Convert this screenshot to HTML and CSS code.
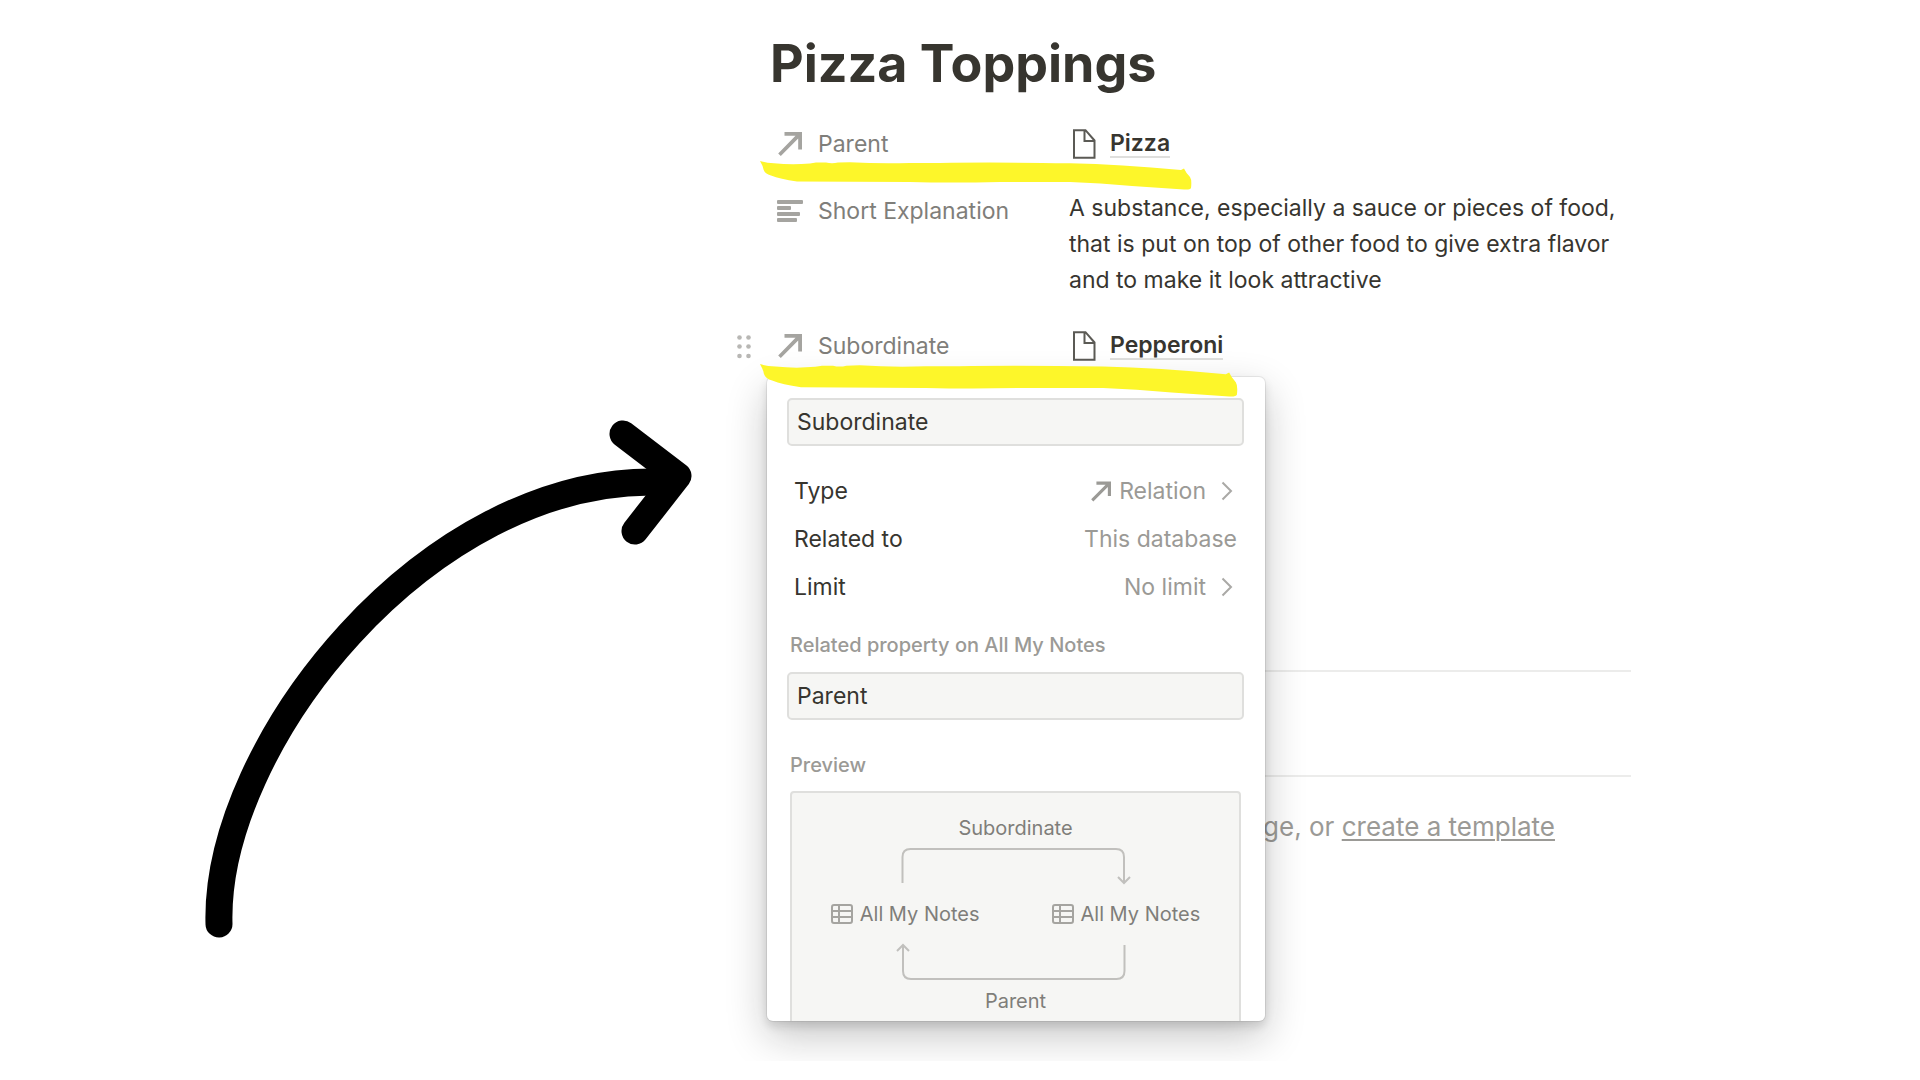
FILE: index.html
```
<!DOCTYPE html>
<html lang="en">
<head>
<meta charset="utf-8">
<meta name="viewport" content="width=device-width, initial-scale=1">
<title>Pizza Toppings</title>
<link rel="stylesheet" href="styles.css">
</head>
<body>
<svg class="defs" aria-hidden="true">
<symbol id="relation" viewBox="0 0 24 24"><path d="M6.500 0H24v17.500h-3.800V6.500L2.800 24 .2 21.400 17.500 3.800H6.500z"/></symbol>
<symbol id="page" viewBox="0 0 24 30"><path d="M2 1.200h11.500l9 10.300v17.200H2zM12.500 1.500V12h9.500" fill="none" stroke="currentColor" stroke-width="2"/></symbol>
<symbol id="chevron" viewBox="0 0 12 20"><path d="M1.500 1.500L10 10l-8.500 8.500" fill="none" stroke="currentColor" stroke-width="2"/></symbol>
<symbol id="table" viewBox="0 0 22 20"><path d="M3 1h16q2 0 2 2v14q0 2-2 2H3q-2 0-2-2V3q0-2 2-2zM1 7h20M1 13h20M8 1v18" fill="none" stroke="currentColor" stroke-width="2"/></symbol>
<symbol id="marker" viewBox="0 0 432 29" preserveAspectRatio="none"><path d="M0 0Q6 2 14 2.300Q32 4 50 2.500L56 1.500H66Q72 3 78 1.500L90 1.200Q120 3 150 2H180Q230 1 310 2.300Q360 3.500 421 9L424 7.500Q426 12 430 16Q432 19 431 27Q430 29 424 28.500L372 25Q340 22 310 21H240Q190 22 150 21L37 20.500Q20 18 11 14.500Q5 13 3.500 8.500Q3 5 0 0z"/></symbol>
</svg>
<div class="stage">
<aside class="side">
<svg class="swoosh" viewBox="0 0 487 519" aria-hidden="true">
<path d="M14 505C9 326 222 57 454 63"/>
<path d="M418 15l55 42-43 55"/>
</svg>
</aside>
<main class="page">
<h1 class="title">Pizza Toppings</h1>
<div class="props">
<div class="prop">
<div class="name"><svg class="icon rel"><use href="#relation"/></svg>Parent</div>
<div class="value"><svg class="icon doc"><use href="#page"/></svg><a href="#pizza" class="link">Pizza</a></div>
<svg class="mark" aria-hidden="true"><use href="#marker"/></svg>
</div>
<div class="prop">
<div class="name"><svg class="icon lines" viewBox="0 0 26 22"><rect width="26" height="4" rx="1"/><rect y="6" width="14" height="4" rx="1"/><rect y="12" width="23" height="4" rx="1"/><rect y="18" width="20" height="4" rx="1"/></svg>Short Explanation</div>
<p class="text">A substance, especially a sauce or pieces of food, that is put on top of other food to give extra flavor and to make it look attractive</p>
</div>
<div class="prop">
<button class="grip" aria-label="Move property"><svg viewBox="0 0 14 24"><circle cx="2.500" cy="2.500" r="2.300"/><circle cx="11.500" cy="2.500" r="2.300"/><circle cx="2.500" cy="11.500" r="2.300"/><circle cx="11.500" cy="11.500" r="2.300"/><circle cx="2.500" cy="21" r="2.300"/><circle cx="11.500" cy="21" r="2.300"/></svg></button>
<div class="name"><svg class="icon rel"><use href="#relation"/></svg>Subordinate</div>
<div class="value"><svg class="icon doc"><use href="#page"/></svg><a href="#pepperoni" class="link">Pepperoni</a></div>
<form class="menu">
<input class="field" type="text" value="Subordinate" aria-label="Property name">
<div class="options">
<button type="button" class="option"><span>Type</span><span class="choice"><svg class="small"><use href="#relation"/></svg>Relation<svg class="chev"><use href="#chevron"/></svg></span></button>
<div class="option"><span>Related to</span><span class="choice">This database</span></div>
<button type="button" class="option"><span>Limit</span><span class="choice">No limit<svg class="chev"><use href="#chevron"/></svg></span></button>
</div>
<label class="label" for="related">Related property on All My Notes</label>
<input class="field" type="text" id="related" value="Parent">
<div class="label preview">Preview</div>
<div class="diagram">
<div>Subordinate</div>
<svg class="wire" viewBox="0 0 240 38"><path d="M6.500 36V10q0-8 8-8H220q8 0 8 8v26M222 30l6 6 6-6"/></svg>
<div class="nodes">
<span class="node"><svg class="db"><use href="#table"/></svg>All My Notes</span>
<span class="node"><svg class="db"><use href="#table"/></svg>All My Notes</span>
</div>
<svg class="wire" viewBox="0 0 240 38"><path d="M228.500 2v26q0 8-8 8H15q-8 0-8-8V2M1 8l6-6 6 6"/></svg>
<div>Parent</div>
</div>
</form>
<svg class="mark wide" aria-hidden="true"><use href="#marker"/></svg>
</div>
</div>
<div class="comments"></div>
<p class="hint">page, or <a href="#template">create a template</a></p>
</main>
</div>
</body>
</html>
```
FILE: styles.css
```
*{box-sizing:border-box}
body{margin:0;background-color:#fff;color:#37352f;font-family:Inter,"Liberation Sans",sans-serif;font-size:23px;line-height:36px}
h1,p{margin:0}
svg{display:block;flex:none;fill:currentColor}
button,input{font:inherit;color:inherit}
.defs{position:absolute;width:0;height:0}
.stage{display:grid;grid-template-columns:3fr 5fr}
.side{display:flex;justify-content:flex-end;align-items:flex-start;padding:419px 28px 0 0}
.swoosh{width:487px;max-width:100%;fill:none;stroke:#000;stroke-width:27;stroke-linecap:round;stroke-linejoin:round}
.page{min-height:calc(100vh - 19px);max-width:1200px;padding:32px 289px 0 47px;overflow:hidden}
.title{margin-left:3px;font-size:52px;line-height:64px;font-weight:700}
.props{display:grid;gap:19px;margin-top:24px}
.prop{position:relative;display:grid;grid-template-columns:302px 1fr;align-items:start}
.name{display:flex;align-items:center;gap:15px;height:48px;padding-left:10px;color:#7f7e7a}
.icon{color:#a5a4a0}
.rel{width:26px;height:24px}
.lines{width:26px;height:22px}
.value{display:flex;align-items:center;gap:14px;height:48px;padding-left:3px}
.doc{width:24px;height:30px;color:#5b5a55}
.link{color:inherit;text-decoration:none;font-weight:600;line-height:26px;border-bottom:2px solid #dfdfdd}
.text{padding:3px 0 5px}
.grip{position:absolute;left:-30px;top:13px;width:14px;height:24px;padding:0;border:0;background:none;color:#b8b7b4}
.mark{position:absolute;left:-7px;top:41px;width:432px;height:29px;color:#fdf62a}
.mark.wide{top:42px;width:478px;height:33px}

/* property menu */
.menu{position:absolute;left:0;top:55px;width:498px;height:644px;padding:21px 21px 0 20px;overflow:hidden;border-radius:6px;background-color:#fff;
box-shadow:0 0 0 1px rgba(15,15,15,.07),0 5px 10px rgba(15,15,15,.13),0 15px 40px rgba(15,15,15,.24)}
.field{display:block;width:100%;height:48px;padding:0 8px;border:2px solid #dfdfdd;border-radius:5px;background-color:#f6f6f4}
.options{margin:21px 0 22px}
.option{display:flex;justify-content:space-between;align-items:center;width:100%;height:48px;padding:0 7px;border:0;background:none;text-align:left}
.choice{display:flex;align-items:center;gap:8px;color:#9b9a96}
.small{width:20px;height:21px}
.chev{width:12px;height:20px;margin:0 4px 0 7px;color:#aaa9a6}
.label{display:block;margin:0 3px 15px;font-size:20px;line-height:24px;font-weight:500;color:#9b9a96}
.preview{margin:33px 3px 14px}
.diagram{display:flex;flex-direction:column;align-items:center;height:280px;margin:0 3px;padding-top:23px;border:2px solid #dfdfdd;border-radius:4px;background-color:#f6f6f4;color:#7f7e7a;font-size:20px;line-height:24px}
.wire{width:240px;height:38px;margin:7px 0 8px;fill:none;stroke:#c1c0bd;stroke-width:2}
.nodes{display:flex;gap:72px;margin:9px 0 10px}
.node{display:flex;align-items:center;gap:7px}
.db{width:22px;height:20px;color:#a5a4a0}

.comments{height:107px;margin-top:300px;border-top:2px solid #ececeb;border-bottom:2px solid #ececeb}
.hint{padding:30px 76px 0 0;text-align:right;font-size:26px;line-height:40px;color:#9b9a96}
.hint a{color:inherit;text-decoration-thickness:2px;text-underline-offset:3px}
```
